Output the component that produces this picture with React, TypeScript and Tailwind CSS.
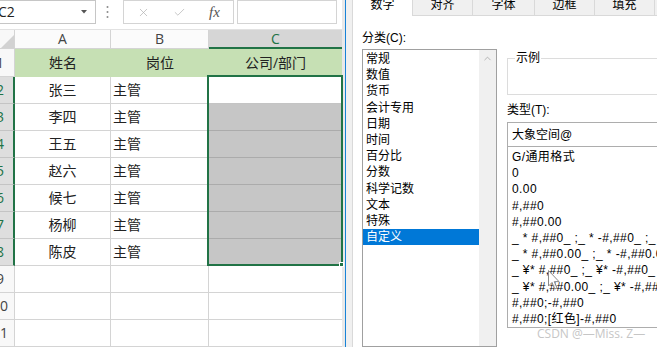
import React from "react";
import clsx from "clsx";
import { X, Check, ChevronUp } from "lucide-react";

const people = ["张三", "李四", "王五", "赵六", "候七", "杨柳", "陈皮"];

const categories = [
  "常规",
  "数值",
  "货币",
  "会计专用",
  "日期",
  "时间",
  "百分比",
  "分数",
  "科学记数",
  "文本",
  "特殊",
  "自定义",
];

const formats = [
  "G/通用格式",
  "0",
  "0.00",
  "#,##0",
  "#,##0.00",
  '_ * #,##0_ ;_ * -#,##0_ ;_ * "-"_ ;_ @_ ',
  '_ * #,##0.00_ ;_ * -#,##0.00_ ;_ * "-"??_ ;_ @_ ',
  '_ ¥* #,##0_ ;_ ¥* -#,##0_ ;_ ¥* "-"_ ;_ @_ ',
  '_ ¥* #,##0.00_ ;_ ¥* -#,##0.00_ ;_ ¥* "-"??_ ;_ @_ ',
  "#,##0;-#,##0",
  "#,##0;[红色]-#,##0",
];

const tabs = [
  { label: "数字", w: "w-[61px]" },
  { label: "对齐", w: "w-[60px]" },
  { label: "字体", w: "w-[62px]" },
  { label: "边框", w: "w-[60px]" },
  { label: "填充", w: "w-[60px]" },
];

function RowHead({ n, sel, tall }: { n: number; sel?: boolean; tall?: boolean }) {
  return (
    <div
      className={clsx(
        "w-[15px] shrink-0 overflow-hidden flex items-center border-b text-[14px]",
        tall ? "h-[28px]" : "h-[27px]",
        sel
          ? "bg-[#dedede] text-[#217346] border-b-[#c4c4c4] border-r-2 border-r-[#217346]"
          : "bg-[#f8f8f8] text-[#444] border-b-[#d4d4d4] border-r border-r-[#d4d4d4]"
      )}
    >
      <div className="w-[30px] ml-[-15px] shrink-0 text-center leading-[16px]">{n}</div>
    </div>
  );
}

function Spreadsheet() {
  return (
    <div className="w-[342px] shrink-0 flex flex-col bg-white text-[#222]">
      {/* formula bar */}
      <div className="h-[30px] flex items-center">
        <div className="ml-[-1px] w-[97px] h-[24px] border border-[#c6c6c6] flex items-center pr-[8px]">
          <span className="ml-[-2px] text-[14px] leading-[16px] text-[#222]">C2</span>
          <svg className="ml-auto" width="6" height="4" viewBox="0 0 6 4">
            <path d="M0 0 L6 0 L3 3.5 Z" fill="#555" />
          </svg>
        </div>
        <svg className="ml-[10px]" width="3" height="14" viewBox="0 0 3 14">
          <circle cx="1.5" cy="2" r="1" fill="#8a8a8a" />
          <circle cx="1.5" cy="7" r="1" fill="#8a8a8a" />
          <circle cx="1.5" cy="12" r="1" fill="#8a8a8a" />
        </svg>
        <div className="ml-[14px] w-[111px] h-[24px] border border-[#d4d4d4] flex items-center">
          <X className="ml-[13px]" size={13} strokeWidth={1.3} color="#b0b0b0" />
          <Check className="ml-[23px]" size={13} strokeWidth={1.3} color="#b0b0b0" />
          <span className="ml-[23px] font-['Liberation_Serif',serif] italic text-[15px] leading-[16px] text-[#555]">
            fx
          </span>
        </div>
        <div className="ml-[3px] flex-1 mr-[5px] h-[24px] border border-[#d4d4d4]" />
      </div>
      <div className="h-[8px]" />

      {/* grid */}
      <div className="relative flex flex-col">
        <div className="h-[20px] flex border-t border-t-[#e2e2e2] text-[14px] leading-[16px]">
          <div className="w-[15px] shrink-0 bg-[#f8f8f8] border-r border-b border-[#d4d4d4] flex items-end justify-end">
            <svg width="13" height="13" viewBox="0 0 13 13">
              <path d="M13 0 L13 13 L0 13 Z" fill="#d2d2d2" />
            </svg>
          </div>
          <div className="w-[96px] shrink-0 bg-[#fbfbfb] border-r border-b border-[#d4d4d4] flex items-center justify-center text-[#444]">
            A
          </div>
          <div className="w-[98px] shrink-0 bg-[#fbfbfb] border-r border-b border-[#d4d4d4] flex items-center justify-center text-[#444]">
            B
          </div>
          <div className="flex-1 bg-[#d6d6d6] border-b-2 border-b-[#217346] flex items-center justify-center text-[#217346]">
            C
          </div>
        </div>

        {/* header row */}
        <div className="flex text-[14px] leading-[16px]">
          <RowHead n={1} tall />
          <div className="flex-1 h-[28px] bg-[#c6e0b4] flex items-center">
            <div className="w-[96px] text-center">姓名</div>
            <div className="w-[98px] text-center">岗位</div>
            <div className="flex-1 text-center">公司/部门</div>
          </div>
        </div>

        {people.map((p, i) => (
          <div key={p} className="flex text-[14px] leading-[16px]">
            <RowHead n={i + 2} sel />
            <div className="w-[96px] shrink-0 h-[27px] border-r border-b border-[#d4d4d4] flex items-center justify-center">
              {p}
            </div>
            <div className="w-[98px] shrink-0 h-[27px] border-r border-b border-[#d4d4d4] flex items-center pl-[2px]">
              主管
            </div>
            <div
              className={clsx(
                "flex-1 h-[27px] border-b",
                i === 0 ? "bg-white border-[#c4c4c4]" : "bg-[#c6c6c6] border-[#ababab]"
              )}
            />
          </div>
        ))}

        {[9, 10, 11].map((n) => (
          <div key={n} className="flex text-[14px] leading-[16px]">
            <RowHead n={n} />
            <div className="w-[96px] shrink-0 h-[27px] border-r border-b border-[#d4d4d4]" />
            <div className="w-[98px] shrink-0 h-[27px] border-r border-b border-[#d4d4d4]" />
            <div className="flex-1 h-[27px] border-b border-[#d4d4d4]" />
          </div>
        ))}

        {/* selection outline C2:C8 */}
        <div className="absolute left-[207px] top-[46px] w-[136px] h-[191px] border-2 border-[#217346]" />
        <div className="absolute left-[339px] top-[233px] w-[5px] h-[5px] bg-[#217346] border border-white" />
      </div>
    </div>
  );
}

function FormatDialog() {
  return (
    <div className="flex-1 min-w-0 bg-[#f0f0f0] pl-[6px] flex flex-col text-[12px] text-black font-['Liberation_Sans','Noto_Sans_CJK_SC',sans-serif]">
      <div className="mt-[-6px] h-[22px] flex shrink-0">
        {tabs.map((t, i) => (
          <div
            key={t.label}
            className={clsx(
              t.w,
              "shrink-0 flex items-center justify-center leading-[16px] border-r border-[#d9d9d9]",
              i === 0 ? "bg-white border-l" : "bg-[#f0f0f0] border-b"
            )}
          >
            {t.label}
          </div>
        ))}
        <div className="flex-1 border-b border-[#d9d9d9]" />
      </div>

      <div className="flex-1 bg-white border-l border-[#d9d9d9] flex pl-[9px] overflow-hidden">
        <div className="w-[135px] shrink-0 pt-[14px] flex flex-col">
          <div className="h-[16px] leading-[16px]">分类(C):</div>
          <div className="mt-[3px] h-[320px] border border-[#a0a0a0] flex">
            <div className="flex-1 pt-[1px]">
              {categories.map((c, i) => (
                <div
                  key={c}
                  className={clsx(
                    "h-[16.2px] leading-[16.2px] pl-[3px]",
                    i === categories.length - 1 && "bg-[#0078d7] text-white"
                  )}
                >
                  {c}
                </div>
              ))}
            </div>
            <div className="w-[17px] bg-[#f0f0f0] flex justify-center pt-[3px]">
              <ChevronUp size={11} strokeWidth={1.6} color="#a0a0a0" />
            </div>
          </div>
        </div>

        <div className="w-[220px] shrink-0 ml-[10px] pt-[34px] flex flex-col">
          <fieldset className="h-[45px] border border-[#dcdcdc] px-[7px]">
            <legend className="px-[1px] leading-[16px]">示例</legend>
          </fieldset>
          <div className="mt-[7px] h-[16px] leading-[16px]">类型(T):</div>
          <div className="mt-[4px] h-[25px] border border-[#adadad] flex items-center pl-[4px] leading-[16px]">
            大象空间@
          </div>
          <div className="h-[181px] border-x border-b border-[#adadad] pt-[2px] pl-[4px] overflow-hidden tracking-[0.4px]">
            {formats.map((f) => (
              <div key={f} className="h-[16.2px] leading-[16.2px] whitespace-pre">
                {f}
              </div>
            ))}
          </div>
        </div>
      </div>
    </div>
  );
}

export default function App() {
  return (
    <div className="relative w-[657px] h-[347px] overflow-hidden flex bg-white font-['Open_Sans','Noto_Sans_CJK_SC',sans-serif]">
      <Spreadsheet />
      <div className="w-[3px] shrink-0 bg-[#e9e9e9]" />
      <div className="w-px shrink-0 bg-[#1883d7]" />
      <FormatDialog />

      {/* mouse pointer */}
      <svg className="absolute left-[548px] top-[270px]" width="13" height="21" viewBox="0 0 13 21">
        <path
          d="M0.5 0.5 L0.5 16 L4 12.5 L6.8 19 L9 18 L6.3 11.6 L11 11.6 Z"
          fill="rgba(255,255,255,0.85)"
          stroke="#8a8a8a"
          strokeWidth="1"
        />
      </svg>

      {/* watermark */}
      <div className="absolute left-[537px] top-[327px] text-[12px] leading-[14px] text-[#c6c6c6] whitespace-nowrap">
        CSDN @—Miss. Z—
      </div>
    </div>
  );
}
